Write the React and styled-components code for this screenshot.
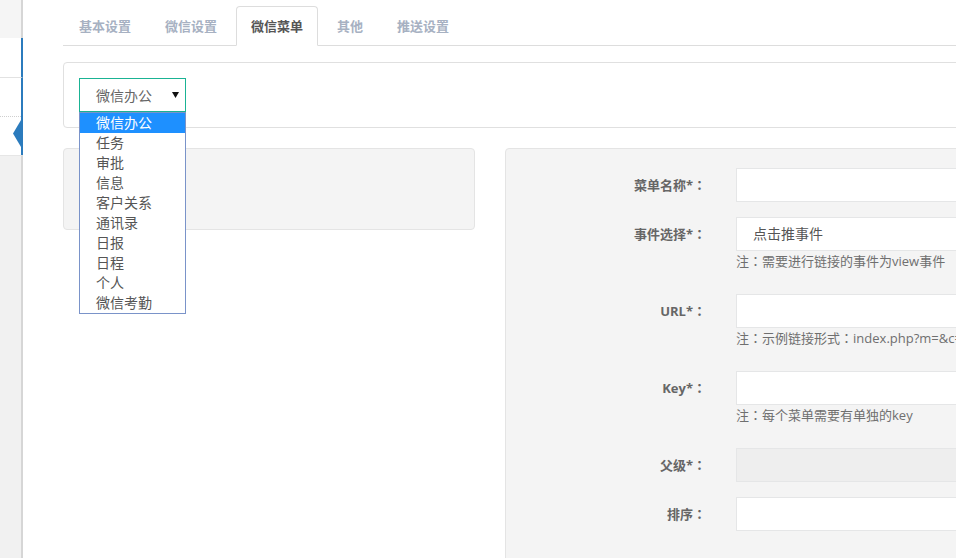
import React from "react";
import styled, { createGlobalStyle } from "styled-components";

const Global = createGlobalStyle`
  html, body { margin: 0; padding: 0; overflow: hidden; background: #fff; }
  body { font-family: "Open Sans", "Noto Sans CJK SC", sans-serif; color: #676a6c; font-size: 13px; }
  * { box-sizing: border-box; }
`;

const Page = styled.div`
  display: flex;
  min-height: 100vh;
  width: 1200px;
`;

const Sidebar = styled.aside`
  width: 23px;
  flex: none;
  display: flex;
  flex-direction: column;
  background: #f1f1f1;
`;

const SideBlock = styled.div`
  height: ${(p) => p.$h}px;
  background: ${(p) => (p.$active ? "#fff" : "#f5f5f5")};
  border-right: 2px solid ${(p) => (p.$active ? "#2b7bbd" : "#d6d6d6")};
  border-bottom: ${(p) => (p.$sep ? "1px solid #e2e2e2" : "none")};
  position: relative;
`;

const SideFill = styled.div`
  flex: 1;
  background: #f1f1f1;
  border-right: 2px solid #d6d6d6;
  border-top: 1px solid #e6e6e6;
`;

const Dotted = styled.div`
  border-top: 1px dotted #cfcfcf;
  margin-top: 38px;
`;

const Pointer = styled.div`
  position: absolute;
  right: 0;
  top: 42px;
  width: 8px;
  height: 27px;
  background: #2b7bbd;
  clip-path: polygon(100% 0, 100% 100%, 0 50%);
`;

const Main = styled.main`
  flex: 1;
  padding: 6px 0 0 40px;
`;

const Tabs = styled.ul`
  display: flex;
  list-style: none;
  margin: 0;
  padding: 0 0 0 1px;
  border-bottom: 1px solid #ddd;
`;

const Tab = styled.li`
  margin-right: 4px;
  margin-bottom: -1px;
  padding: 10px 14px;
  line-height: 18px;
  font-size: 13px;
  font-weight: 600;
  color: ${(p) => (p.$active ? "#555" : "#a7b1c2")};
  background: ${(p) => (p.$active ? "#fff" : "transparent")};
  border-style: solid;
  border-width: 1px;
  border-color: ${(p) => (p.$active ? "#ddd #ddd #fff #ddd" : "transparent")};
  border-radius: 4px 4px 0 0;
`;

const TopPanel = styled.section`
  margin-top: 16px;
  border: 1px solid #e0e0e0;
  border-radius: 4px;
  padding: 15px;
  background: #fff;
`;

const SelectWrap = styled.div`
  position: relative;
  width: 107px;
`;

const SelectBox = styled.div`
  height: 34px;
  border: 1px solid #1ab394;
  display: flex;
  align-items: center;
  justify-content: space-between;
  padding: 0 6px 0 16px;
  font-size: 14px;
  color: #666;
  background: #fff;
`;

const DropList = styled.ul`
  position: absolute;
  left: 0;
  top: 100%;
  width: 107px;
  margin: 0;
  padding: 0;
  list-style: none;
  background: #fff;
  border: 1px solid #7a93c9;
  z-index: 5;
`;

const DropItem = styled.li`
  height: 20px;
  line-height: 20px;
  padding-left: 16px;
  font-size: 14px;
  color: ${(p) => (p.$selected ? "#fff" : "#555")};
  background: ${(p) => (p.$selected ? "#1e90ff" : "#fff")};
`;

const Columns = styled.div`
  display: flex;
  gap: 30px;
  margin-top: 20px;
  align-items: flex-start;
`;

const GrayPanel = styled.section`
  background: #f4f4f4;
  border: 1px solid #e4e4e4;
  border-radius: 4px;
  width: ${(p) => p.$w}px;
  min-height: ${(p) => p.$h}px;
`;

const Form = styled.div`
  display: grid;
  grid-template-columns: 215px 400px;
  column-gap: 15px;
  row-gap: 15px;
  padding: 19px 0 40px;
`;

const Label = styled.label`
  text-align: right;
  padding-right: 15px;
  font-weight: 700;
  font-size: 13px;
  line-height: 34px;
  color: #666;
`;

const Colon = styled.span`
  font-family: "Noto Sans CJK TC", "Noto Sans CJK SC", sans-serif;
`;

const Field = styled.div`
  display: flex;
  flex-direction: column;
`;

const Input = styled.div`
  height: 34px;
  border: 1px solid #e5e6e7;
  background: ${(p) => (p.$disabled ? "#eee" : "#fff")};
  padding: 0 16px;
  font-size: 14px;
  line-height: 32px;
  color: #555;
`;

const Help = styled.div`
  margin: 1px 0 9px;
  line-height: 18px;
  font-size: 13px;
  color: #6f6f6f;
  white-space: nowrap;
`;

const Caret = () => (
  <svg width="7" height="6" viewBox="0 0 7 6">
    <path d="M0 0 H7 L3.5 6 Z" fill="#111" />
  </svg>
);

const withColon = (text) => {
  const parts = text.split("：");
  return parts.map((p, i) => (
    <React.Fragment key={i}>
      {p}
      {i < parts.length - 1 && <Colon>：</Colon>}
    </React.Fragment>
  ));
};

const options = ["微信办公", "任务", "审批", "信息", "客户关系", "通讯录", "日报", "日程", "个人", "微信考勤"];
const tabs = ["基本设置", "微信设置", "微信菜单", "其他", "推送设置"];

const rows = [
  { label: "菜单名称*：" },
  { label: "事件选择*：", value: "点击推事件", help: "注：需要进行链接的事件为view事件" },
  { label: "URL*：", help: "注：示例链接形式：index.php?m=&c=&a=" },
  { label: "Key*：", help: "注：每个菜单需要有单独的key" },
  { label: "父级*：", disabled: true },
  { label: "排序：" },
];

export default function App() {
  return (
    <>
      <Global />
      <Page>
        <Sidebar>
          <SideBlock $h={38} />
          <SideBlock $h={40} $active $sep />
          <SideBlock $h={77} $active>
            <Dotted />
            <Pointer />
          </SideBlock>
          <SideFill />
        </Sidebar>
        <Main>
          <Tabs>
            {tabs.map((t) => (
              <Tab key={t} $active={t === "微信菜单"}>{t}</Tab>
            ))}
          </Tabs>
          <TopPanel>
            <SelectWrap>
              <SelectBox>
                <span>微信办公</span>
                <Caret />
              </SelectBox>
              <DropList>
                {options.map((o, i) => (
                  <DropItem key={o} $selected={i === 0}>{o}</DropItem>
                ))}
              </DropList>
            </SelectWrap>
          </TopPanel>
          <Columns>
            <GrayPanel $w={412} $h={82} />
            <GrayPanel $w={640} $h={420}>
              <Form>
                {rows.map((r) => (
                  <React.Fragment key={r.label}>
                    <Label>{withColon(r.label)}</Label>
                    <Field>
                      <Input $disabled={r.disabled}>{r.value}</Input>
                      {r.help && <Help>{withColon(r.help)}</Help>}
                    </Field>
                  </React.Fragment>
                ))}
              </Form>
            </GrayPanel>
          </Columns>
        </Main>
      </Page>
    </>
  );
}
